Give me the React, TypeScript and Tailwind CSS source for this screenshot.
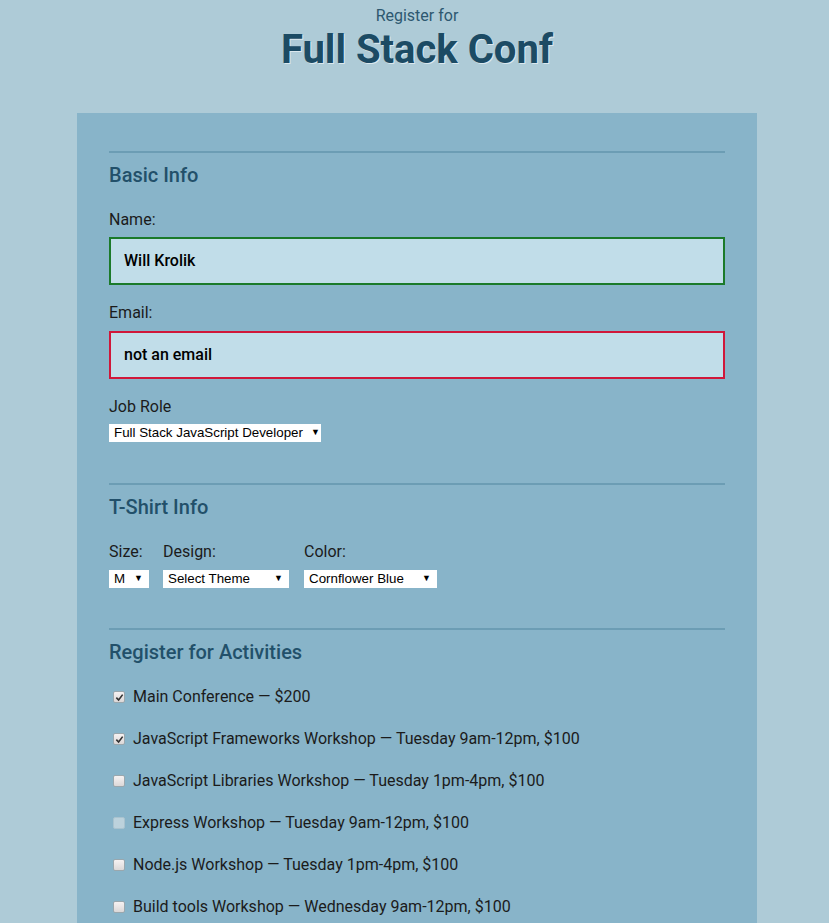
import React from "react";

const activities = [
  { label: "Main Conference — $200", checked: true },
  { label: "JavaScript Frameworks Workshop — Tuesday 9am-12pm, $100", checked: true },
  { label: "JavaScript Libraries Workshop — Tuesday 1pm-4pm, $100", checked: false },
  { label: "Express Workshop — Tuesday 9am-12pm, $100", checked: false, disabled: true },
  { label: "Node.js Workshop — Tuesday 1pm-4pm, $100", checked: false },
  { label: "Build tools Workshop — Wednesday 9am-12pm, $100", checked: false },
];

function Select({ value, className }: { value: string; className: string }) {
  return (
    <div
      className={`flex h-[18px] items-center justify-between bg-white pl-[5px] pr-[6px] text-[13.33px] text-black font-['Liberation_Sans',Arial,sans-serif] ${className}`}
    >
      <span className="whitespace-nowrap">{value}</span>
      <span className="ml-2 text-[9px]">▼</span>
    </div>
  );
}

function Checkbox({ checked, disabled }: { checked: boolean; disabled?: boolean }) {
  return (
    <span
      className={`flex h-[12px] w-[12px] shrink-0 items-center justify-center rounded-[2px] border ${
        disabled
          ? "border-[#a9c3cf] bg-[#bcd2dc]"
          : "border-[#9aa7ad] bg-gradient-to-b from-[#f6f2f2] to-[#dcd8d8]"
      }`}
    >
      {checked && (
        <svg viewBox="0 0 10 10" className="h-[9px] w-[9px]">
          <path d="M1.5 5.2 L4 7.8 L8.5 1.8" fill="none" stroke="#333" strokeWidth="1.8" />
        </svg>
      )}
    </span>
  );
}

function Legend({ children }: { children: React.ReactNode }) {
  return (
    <div className="border-t-2 border-[#6c9db4] pt-[11px]">
      <h2 className="text-[20px] font-medium leading-[22px] text-[#22506a]">{children}</h2>
    </div>
  );
}

export default function App() {
  return (
    <div className="min-h-screen bg-[#aecbd7] pl-[5px] font-['Roboto',sans-serif] text-[#1b1b1b]">
      {/* Header */}
      <header className="flex flex-col items-center pt-[6px]">
        <span className="text-[16px] leading-[20px] text-[#2d5870]">Register for</span>
        <h1 className="mt-[2px] text-[40px] font-bold leading-[44px] text-[#1c4b64] [text-shadow:1px_1px_0_#dbe8ee]">
          Full Stack Conf
        </h1>
      </header>

      <form className="mx-auto mt-[41px] w-[680px] bg-[#88b4c9] px-[32px] pt-[38px] pb-[20px]">
        {/* Basic Info */}
        <Legend>Basic Info</Legend>
        <div className="mt-[24px] text-[16px] leading-[20px]">Name:</div>
        <div className="mt-[7px] flex h-[48px] items-center border-2 border-[#1b7a2a] bg-[#c1dde9] px-[13px] text-[16px] font-medium text-black">
          Will Krolik
        </div>
        <div className="mt-[18px] text-[16px] leading-[20px]">Email:</div>
        <div className="mt-[8px] flex h-[48px] items-center border-2 border-[#d0173a] bg-[#c1dde9] px-[13px] text-[16px] font-medium text-black">
          not an email
        </div>
        <div className="mt-[18px] text-[16px] leading-[20px]">Job Role</div>
        <Select value="Full Stack JavaScript Developer" className="mt-[7px] w-[212px]" />

        {/* T-Shirt Info */}
        <div className="mt-[41px]">
          <Legend>T-Shirt Info</Legend>
        </div>
        <div className="mt-[24px] flex items-start">
          <div className="flex flex-col">
            <span className="text-[16px] leading-[20px]">Size:</span>
            <Select value="M" className="mt-[8px] w-[40px]" />
          </div>
          <div className="ml-[14px] flex flex-col">
            <span className="text-[16px] leading-[20px]">Design:</span>
            <Select value="Select Theme" className="mt-[8px] w-[126px]" />
          </div>
          <div className="ml-[15px] flex flex-col">
            <span className="text-[16px] leading-[20px]">Color:</span>
            <Select value="Cornflower Blue" className="mt-[8px] w-[133px]" />
          </div>
        </div>

        {/* Activities */}
        <div className="mt-[40px]">
          <Legend>Register for Activities</Legend>
        </div>
        <div className="mt-[24px] flex flex-col gap-[22px]">
          {activities.map((a) => (
            <label key={a.label} className="flex h-[20px] items-center pl-[4px] text-[16px] leading-[20px]">
              <Checkbox checked={a.checked} disabled={a.disabled} />
              <span className="ml-[8px]">{a.label}</span>
            </label>
          ))}
        </div>
      </form>
    </div>
  );
}
